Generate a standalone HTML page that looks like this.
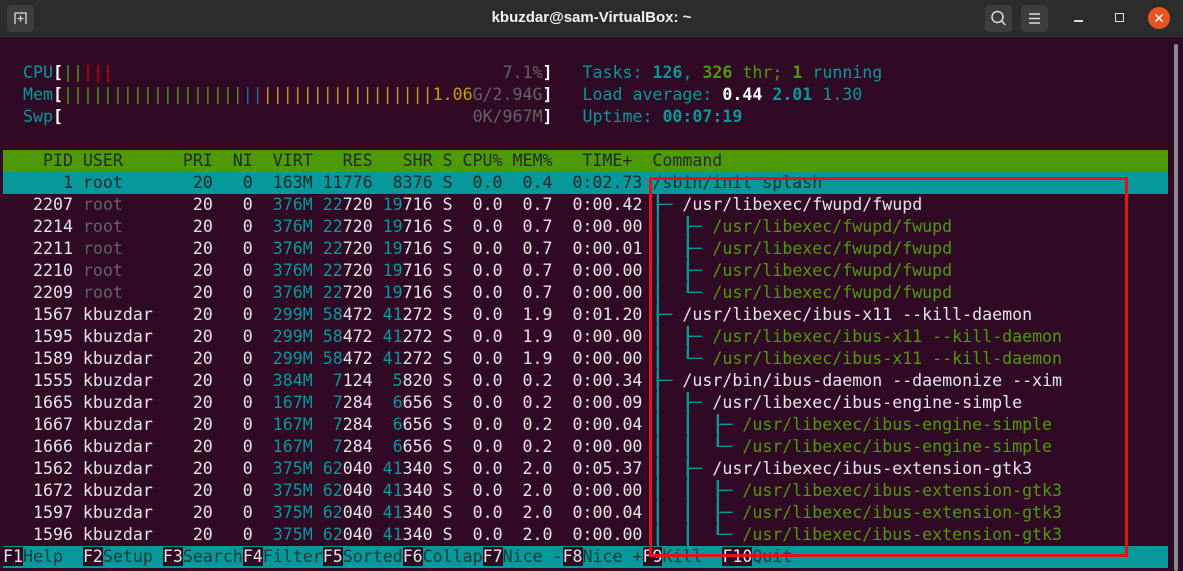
<!DOCTYPE html>
<html><head><meta charset="utf-8"><style>
*{margin:0;padding:0;box-sizing:border-box}
body{width:1183px;height:571px;overflow:hidden;background:#300a24;position:relative;font-family:"DejaVu Sans Mono","Liberation Mono",monospace}
#tb{position:absolute;left:0;top:0;width:1183px;height:38px;background:#2c2c2c;border-bottom:1px solid #1e1e1e}
#title{position:absolute;left:0;width:1183px;top:9px;text-align:center;color:#f2f2f2;font:bold 15px "Liberation Sans",sans-serif}
.btn{position:absolute;top:5px;width:27px;height:27px;background:#3d3d3d;border-radius:4px}
.r{position:absolute;left:3px;height:22px;line-height:22px;font-size:16.6px;white-space:pre;color:#e4e4e4}
.c{color:#06989a}.g{color:#4e9a06}.d{color:#626262}.k{color:#232a2a}.w{color:#ffffff}.y{color:#c4a000}.rd{color:#cc0000}.b{color:#3465a4}.B{font-weight:bold}
.fk{color:#e4e4e4}.fl{background:#06989a;color:#1d3a3c}
.v{position:absolute;width:2px;background:#06989a}
</style></head><body>
<div id="tb">
<div class="btn" style="left:7px"><svg width="27" height="27" viewBox="0 0 27 27"><path d="M8 19V8h11v11" fill="none" stroke="#ddd" stroke-width="1.3"/><path d="M13.5 10.5v6M10.5 13.5h6" stroke="#ddd" stroke-width="1.3"/></svg></div>
<div id="title">kbuzdar@sam-VirtualBox: ~</div>
<div class="btn" style="left:985px"><svg width="27" height="27" viewBox="0 0 27 27"><circle cx="12.5" cy="12" r="5.5" fill="none" stroke="#ddd" stroke-width="1.5"/><path d="M16.5 16l4 4" stroke="#ddd" stroke-width="1.5"/></svg></div>
<div class="btn" style="left:1021px"><svg width="27" height="27" viewBox="0 0 27 27"><path d="M8 9h11M8 13.5h11M8 18h11" stroke="#ddd" stroke-width="1.4"/></svg></div>
<div style="position:absolute;left:1074px;top:20px;width:9px;height:1.5px;background:#ddd"></div>
<div style="position:absolute;left:1115px;top:13px;width:9px;height:9px;border:1.5px solid #ddd"></div>
<div style="position:absolute;left:1148px;top:7px;width:22px;height:22px;border-radius:50%;background:#e95420"><svg width="22" height="22" viewBox="0 0 22 22"><path d="M7.5 7.5l7 7M14.5 7.5l-7 7" stroke="#fff" stroke-width="1.5"/></svg></div>
</div>
<div style="position:absolute;left:1174px;top:44px;width:4px;height:527px;background:#8c8c8c;border-radius:2px"></div>

<div class="r" style="top:62px">  <span class="c">CPU</span><span class="w B">[</span><span class="g">||</span><span class="rd">|||</span>                                       <span class="d">7.1%</span><span class="w B">]</span>   <span class="c">Tasks: <b>126</b>, </span><span class="g"><b>326</b> thr; <b>1</b></span><span class="c"> running</span></div>
<div class="r" style="top:84px">  <span class="c">Mem</span><span class="w B">[</span><span class="g">||||||||||||||||||</span><span class="b">||</span><span class="y">|||||||||||||||||1.06</span><span class="d">G/2.94G</span><span class="w B">]</span>   <span class="c">Load average: </span><span class="w B">0.44 </span><span class="c"><b>2.01</b> 1.30</span></div>
<div class="r" style="top:106px">  <span class="c">Swp</span><span class="w B">[</span>                                         <span class="d">0K/967M</span><span class="w B">]</span>   <span class="c">Uptime: <b>00:07:19</b></span></div>

<div class="r k" style="top:150px;width:1165px;background:#4e9a06">    PID USER      PRI  NI  VIRT   RES   SHR S CPU% MEM%   TIME+  Command</div>
<div class="r k" style="top:172px;width:1165px;background:#06989a">      1 root       20   0  163M 11776  8376 S  0.0  0.4  0:02.73 /sbin/init splash</div>
<div class="r" style="top:194px">   2207 <span class="d">root     </span>  20   0  <span class="c">376M</span> <span class="c">22</span>720 <span class="c">19</span>716 S  0.0  0.7  0:00.42 <span class="c">├─ </span>/usr/libexec/fwupd/fwupd</div>
<div class="r" style="top:216px">   2214 <span class="d">root     </span>  20   0  <span class="c">376M</span> <span class="c">22</span>720 <span class="c">19</span>716 S  0.0  0.7  0:00.00 <span class="c">│  ├─ </span><span class="g">/usr/libexec/fwupd/fwupd</span></div>
<div class="r" style="top:238px">   2211 <span class="d">root     </span>  20   0  <span class="c">376M</span> <span class="c">22</span>720 <span class="c">19</span>716 S  0.0  0.7  0:00.01 <span class="c">│  ├─ </span><span class="g">/usr/libexec/fwupd/fwupd</span></div>
<div class="r" style="top:260px">   2210 <span class="d">root     </span>  20   0  <span class="c">376M</span> <span class="c">22</span>720 <span class="c">19</span>716 S  0.0  0.7  0:00.00 <span class="c">│  ├─ </span><span class="g">/usr/libexec/fwupd/fwupd</span></div>
<div class="r" style="top:282px">   2209 <span class="d">root     </span>  20   0  <span class="c">376M</span> <span class="c">22</span>720 <span class="c">19</span>716 S  0.0  0.7  0:00.00 <span class="c">│  └─ </span><span class="g">/usr/libexec/fwupd/fwupd</span></div>
<div class="r" style="top:304px">   1567 kbuzdar    20   0  <span class="c">299M</span> <span class="c">58</span>472 <span class="c">41</span>272 S  0.0  1.9  0:01.20 <span class="c">├─ </span>/usr/libexec/ibus-x11 --kill-daemon</div>
<div class="r" style="top:326px">   1595 kbuzdar    20   0  <span class="c">299M</span> <span class="c">58</span>472 <span class="c">41</span>272 S  0.0  1.9  0:00.00 <span class="c">│  ├─ </span><span class="g">/usr/libexec/ibus-x11 --kill-daemon</span></div>
<div class="r" style="top:348px">   1589 kbuzdar    20   0  <span class="c">299M</span> <span class="c">58</span>472 <span class="c">41</span>272 S  0.0  1.9  0:00.00 <span class="c">│  └─ </span><span class="g">/usr/libexec/ibus-x11 --kill-daemon</span></div>
<div class="r" style="top:370px">   1555 kbuzdar    20   0  <span class="c">384M</span>  <span class="c">7</span>124  <span class="c">5</span>820 S  0.0  0.2  0:00.34 <span class="c">├─ </span>/usr/bin/ibus-daemon --daemonize --xim</div>
<div class="r" style="top:392px">   1665 kbuzdar    20   0  <span class="c">167M</span>  <span class="c">7</span>284  <span class="c">6</span>656 S  0.0  0.2  0:00.09 <span class="c">│  ├─ </span>/usr/libexec/ibus-engine-simple</div>
<div class="r" style="top:414px">   1667 kbuzdar    20   0  <span class="c">167M</span>  <span class="c">7</span>284  <span class="c">6</span>656 S  0.0  0.2  0:00.04 <span class="c">│  │  ├─ </span><span class="g">/usr/libexec/ibus-engine-simple</span></div>
<div class="r" style="top:436px">   1666 kbuzdar    20   0  <span class="c">167M</span>  <span class="c">7</span>284  <span class="c">6</span>656 S  0.0  0.2  0:00.00 <span class="c">│  │  └─ </span><span class="g">/usr/libexec/ibus-engine-simple</span></div>
<div class="r" style="top:458px">   1562 kbuzdar    20   0  <span class="c">375M</span> <span class="c">62</span>040 <span class="c">41</span>340 S  0.0  2.0  0:05.37 <span class="c">│  ├─ </span>/usr/libexec/ibus-extension-gtk3</div>
<div class="r" style="top:480px">   1672 kbuzdar    20   0  <span class="c">375M</span> <span class="c">62</span>040 <span class="c">41</span>340 S  0.0  2.0  0:00.00 <span class="c">│  │  ├─ </span><span class="g">/usr/libexec/ibus-extension-gtk3</span></div>
<div class="r" style="top:502px">   1597 kbuzdar    20   0  <span class="c">375M</span> <span class="c">62</span>040 <span class="c">41</span>340 S  0.0  2.0  0:00.04 <span class="c">│  │  ├─ </span><span class="g">/usr/libexec/ibus-extension-gtk3</span></div>
<div class="r" style="top:524px">   1596 kbuzdar    20   0  <span class="c">375M</span> <span class="c">62</span>040 <span class="c">41</span>340 S  0.0  2.0  0:00.00 <span class="c">│  │  └─ </span><span class="g">/usr/libexec/ibus-extension-gtk3</span></div>

<div class="v" style="left:656.5px;top:194px;height:352px"></div>
<div class="v" style="left:686.5px;top:216px;height:77px"></div>
<div class="v" style="left:686.5px;top:326px;height:33px"></div>
<div class="v" style="left:686.5px;top:392px;height:154px"></div>
<div class="v" style="left:716.5px;top:414px;height:33px"></div>
<div class="v" style="left:716.5px;top:480px;height:55px"></div>

<div style="position:absolute;left:3px;top:546px;width:1165px;height:22px;background:#06989a"></div>
<div class="r" style="top:546px"><span class="fk" style="background:#300a24">F1</span><span class="fl">Help  </span><span class="fk" style="background:#300a24">F2</span><span class="fl">Setup </span><span class="fk" style="background:#300a24">F3</span><span class="fl">Search</span><span class="fk" style="background:#300a24">F4</span><span class="fl">Filter</span><span class="fk" style="background:#300a24">F5</span><span class="fl">Sorted</span><span class="fk" style="background:#300a24">F6</span><span class="fl">Collap</span><span class="fk" style="background:#300a24">F7</span><span class="fl">Nice -</span><span class="fk" style="background:#300a24">F8</span><span class="fl">Nice +</span><span class="fk" style="background:#300a24">F9</span><span class="fl">Kill  </span><span class="fk" style="background:#300a24">F10</span><span class="fl">Quit</span></div>

<div style="position:absolute;left:649px;top:177px;width:479px;height:380px;border:3px solid #e3121c"></div>
</body></html>
